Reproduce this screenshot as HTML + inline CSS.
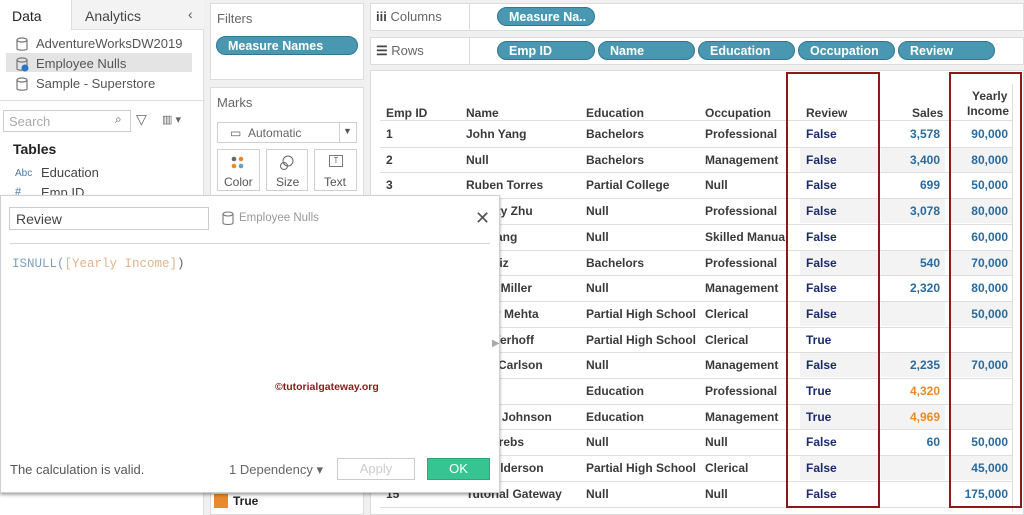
<!DOCTYPE html>
<html><head><meta charset="utf-8"><style>
*{box-sizing:border-box;margin:0;padding:0}
body{width:1024px;height:515px;overflow:hidden;background:#f0f0f0;font-family:"Liberation Sans",sans-serif;position:relative;color:#333}
.a{position:absolute}
.panel{position:absolute;background:#fff;border:1px solid #dcdcdc}
.pill{position:absolute;height:19px;border-radius:10px;background:#4a97b2;border:1px solid #2f7791;color:#fff;font-size:12.5px;font-weight:bold;padding:2px 0 0 11px;white-space:nowrap}
.t{position:absolute;font-size:12px;font-weight:bold;color:#3a3a3a;white-space:nowrap}
.b{color:#1a2a6c}
.n{color:#2a6a9c}
.o{color:#e8892b}
.line{position:absolute;height:1px;background:#dedede}
.sh{position:absolute;background:#f3f3f3}
.r{text-align:right}
</style></head><body>
<div class="panel" style="left:0;top:0;width:204px;height:515px;border:none;border-right:1px solid #dcdcdc"></div>
<div class="a" style="left:0;top:0;width:72px;height:30px;background:#fff;border-right:1px solid #dcdcdc"></div>
<div class="a" style="left:72px;top:0;width:132px;height:30px;background:#f3f3f3;border-bottom:1px solid #dcdcdc"></div>
<div class="a" style="left:12px;top:8px;font-size:14px;color:#222">Data</div>
<div class="a" style="left:85px;top:8px;font-size:14px;color:#444">Analytics</div>
<div class="a" style="left:188px;top:6px;font-size:14px;color:#555">‹</div>
<div class="a" style="left:6px;top:53px;width:186px;height:19px;background:#e4e4e4"></div>
<svg class="a" style="left:15px;top:37px" width="14" height="60"><g fill="none" stroke="#777" stroke-width="1.2"><ellipse cx="7" cy="3" rx="5" ry="2"/><path d="M2 3v9c0 1.5 10 1.5 10 0V3"/><ellipse cx="7" cy="23" rx="5" ry="2"/><path d="M2 23v9c0 1.5 10 1.5 10 0V23"/><ellipse cx="7" cy="43" rx="5" ry="2"/><path d="M2 43v9c0 1.5 10 1.5 10 0V43"/></g><circle cx="10" cy="31" r="3.5" fill="#2a77c9"/></svg>
<div class="a" style="left:36px;top:36px;font-size:13px;color:#555">AdventureWorksDW2019</div>
<div class="a" style="left:36px;top:56px;font-size:13px;color:#555">Employee Nulls</div>
<div class="a" style="left:36px;top:76px;font-size:13px;color:#555">Sample - Superstore</div>
<div class="line" style="left:0;top:100px;width:204px"></div>
<div class="a" style="left:3px;top:110px;width:128px;height:22px;border:1px solid #ccc;background:#fff"></div>
<div class="a" style="left:9px;top:114px;font-size:13px;color:#aaa">Search</div>
<div class="a" style="left:115px;top:112px;font-size:12px;color:#555">⌕</div>
<div class="a" style="left:136px;top:111px;font-size:14px;color:#666">▽</div>
<div class="a" style="left:162px;top:113px;font-size:11px;color:#666">▥ ▾</div>
<div class="a" style="left:13px;top:141px;font-size:14px;font-weight:bold;color:#222">Tables</div>
<div class="a" style="left:15px;top:168px;font-size:10px;color:#4a7aa5">Abc</div>
<div class="a" style="left:41px;top:165px;font-size:13px;color:#444">Education</div>
<div class="a" style="left:15px;top:186px;font-size:11px;color:#4a7aa5">#</div>
<div class="a" style="left:41px;top:185px;font-size:13px;color:#444">Emp ID</div>

<div class="panel" style="left:210px;top:3px;width:154px;height:77px"></div>
<div class="a" style="left:217px;top:11px;font-size:13px;color:#666">Filters</div>
<div class="pill" style="left:216px;top:36px;width:142px;height:19px">Measure Names</div>
<div class="panel" style="left:210px;top:87px;width:154px;height:428px"></div>
<div class="a" style="left:217px;top:95px;font-size:13px;color:#666">Marks</div>
<div class="a" style="left:217px;top:122px;width:140px;height:21px;border:1px solid #d0d0d0;background:#fff"></div>
<div class="a" style="left:339px;top:122px;width:1px;height:21px;background:#d0d0d0"></div>
<div class="a" style="left:230px;top:126px;font-size:12px;color:#666">▭ &nbsp;Automatic</div>
<div class="a" style="left:343px;top:126px;font-size:9px;color:#555">▼</div>
<div class="a" style="left:217px;top:149px;width:43px;height:42px;border:1px solid #d0d0d0"></div>
<div class="a" style="left:266px;top:149px;width:42px;height:42px;border:1px solid #d0d0d0"></div>
<div class="a" style="left:314px;top:149px;width:43px;height:42px;border:1px solid #d0d0d0"></div>
<svg class="a" style="left:231px;top:156px" width="14" height="14"><circle cx="3" cy="3" r="2.3" fill="#666"/><circle cx="10" cy="3" r="2.3" fill="#e8892b"/><circle cx="3" cy="10" r="2.3" fill="#e8892b"/><circle cx="10" cy="10" r="2.3" fill="#6a9bc8"/></svg>
<div class="a" style="left:224px;top:175px;font-size:12px;color:#555">Color</div>
<svg class="a" style="left:279px;top:155px" width="16" height="16"><g fill="none" stroke="#666"><circle cx="9" cy="6" r="5"/><circle cx="5" cy="11" r="3.5"/></g></svg>
<div class="a" style="left:276px;top:175px;font-size:12px;color:#555">Size</div>
<div class="a" style="left:329px;top:155px;width:14px;height:12px;border:1px solid #777;font-size:8px;text-align:center;line-height:10px;color:#666">T</div>
<div class="a" style="left:324px;top:175px;font-size:12px;color:#555">Text</div>
<div class="a" style="left:214px;top:494px;width:14px;height:14px;background:#e8892b"></div>
<div class="a" style="left:233px;top:494px;font-size:12px;font-weight:bold;color:#222">True</div>

<div class="panel" style="left:370px;top:3px;width:654px;height:28px"></div>
<div class="a" style="left:469px;top:3px;width:1px;height:28px;background:#dcdcdc"></div>
<div class="a" style="left:376px;top:9px;font-size:13px;color:#666"><b style="color:#444">iii</b> Columns</div>
<div class="pill" style="left:497px;top:7px;width:98px">Measure Na..</div>
<div class="panel" style="left:370px;top:37px;width:654px;height:28px"></div>
<div class="a" style="left:469px;top:37px;width:1px;height:28px;background:#dcdcdc"></div>
<div class="a" style="left:376px;top:43px;font-size:13px;color:#666"><b style="color:#444">☰</b> Rows</div>
<div class="pill" style="left:497px;top:41px;width:98px">Emp ID</div>
<div class="pill" style="left:598px;top:41px;width:97px">Name</div>
<div class="pill" style="left:698px;top:41px;width:97px">Education</div>
<div class="pill" style="left:798px;top:41px;width:97px">Occupation</div>
<div class="pill" style="left:898px;top:41px;width:97px">Review</div>

<div class="panel" style="left:370px;top:70px;width:654px;height:445px"></div>
<div class="t" style="left:972px;top:89px">Yearly</div>
<div class="t" style="left:386px;top:106px">Emp ID</div>
<div class="t" style="left:466px;top:106px">Name</div>
<div class="t" style="left:586px;top:106px">Education</div>
<div class="t" style="left:705px;top:106px">Occupation</div>
<div class="t" style="left:806px;top:106px">Review</div>
<div class="t" style="left:912px;top:106px">Sales</div>
<div class="t" style="left:967px;top:104px">Income</div>
<div class="line" style="left:380px;top:120px;width:632px"></div>
<div class="a" style="left:1012px;top:84px;width:1px;height:428px;background:#dedede"></div>
<div id="rows"></div>
<script>
var d=[
["1","John Yang","Bachelors","Professional","False","3,578","90,000"],
["2","Null","Bachelors","Management","False","3,400","80,000"],
["3","Ruben Torres","Partial College","Null","False","699","50,000"],
["4","Christy Zhu","Null","Professional","False","3,078","80,000"],
["5","Li Huang","Null","Skilled Manua","False","","60,000"],
["6","Jo Ruiz","Bachelors","Professional","False","540","70,000"],
["7","Janet Miller","Null","Management","False","2,320","80,000"],
["8","Marcy Mehta","Partial High School","Clerical","False","","50,000"],
["9","Rob Verhoff","Partial High School","Clerical","True","",""],
["10","Shay Carlson","Null","Management","False","2,235","70,000"],
["11","","Education","Professional","True","4,320",""],
["12","Wyatt Johnson","Education","Management","True","4,969",""],
["13","Jim Krebs","Null","Null","False","60","50,000"],
["14","Ken Alderson","Partial High School","Clerical","False","","45,000"],
["15","Tutorial Gateway","Null","Null","False","","175,000"]];
var h="";
for(var i=0;i<15;i++){var y=121+i*25.7,r=d[i];
if(i%2==1){h+='<div class="sh" style="left:800px;top:'+(y+1)+'px;width:78px;height:24px"></div><div class="sh" style="left:881px;top:'+(y+1)+'px;width:64px;height:24px"></div><div class="sh" style="left:950px;top:'+(y+1)+'px;width:62px;height:24px"></div>';}
var ty=y+6,oc=(r[4]=="True")?"o":"n";
h+='<div class="t" style="left:386px;top:'+ty+'px">'+r[0]+'</div><div class="t" style="left:466px;top:'+ty+'px">'+r[1]+'</div><div class="t" style="left:586px;top:'+ty+'px">'+r[2]+'</div><div class="t" style="left:705px;top:'+ty+'px">'+r[3]+'</div><div class="t b" style="left:806px;top:'+ty+'px">'+r[4]+'</div><div class="t r '+oc+'" style="left:880px;width:60px;top:'+ty+'px">'+r[5]+'</div><div class="t r n" style="left:940px;width:68px;top:'+ty+'px">'+r[6]+'</div><div class="line" style="left:380px;top:'+(y+25.7)+'px;width:632px"></div>';}
document.getElementById("rows").innerHTML=h;
</script>
<div class="a" style="left:786px;top:72px;width:94px;height:436px;border:2px solid #8b1a1a"></div>
<div class="a" style="left:949px;top:72px;width:73px;height:436px;border:2px solid #8b1a1a"></div>

<div class="a" style="left:0;top:195px;width:500px;height:298px;background:#fff;border:1px solid #cfcfcf;box-shadow:0 2px 3px rgba(0,0,0,.35)"></div>
<div class="a" style="left:9px;top:207px;width:200px;height:23px;border:1px solid #ccc"></div>
<div class="a" style="left:16px;top:211px;font-size:14px;color:#444">Review</div>
<svg class="a" style="left:222px;top:211px" width="12" height="16"><g fill="none" stroke="#777" stroke-width="1.1"><ellipse cx="6" cy="3" rx="5" ry="2"/><path d="M1 3v9c0 2 10 2 10 0V3"/></g></svg>
<div class="a" style="left:239px;top:212px;font-size:11.5px;color:#999">Employee Nulls</div>
<div class="a" style="left:475px;top:208px;font-size:18px;color:#555">✕</div>
<div class="line" style="left:10px;top:243px;width:480px;background:#d5d5d5"></div>
<div class="a" style="left:12px;top:257px;font-family:'Liberation Mono',monospace;font-size:12.5px;color:#7ea0be">ISNULL(<span style="color:#e0b48c">[Yearly Income]</span><span style="color:#666">)</span></div>
<div class="a" style="left:492px;top:338px;font-size:10px;color:#aaa">▶</div>
<div class="a" style="left:275px;top:381px;font-size:10.5px;font-weight:bold;color:#8b1a1a">©tutorialgateway.org</div>
<div class="a" style="left:10px;top:462px;font-size:13px;color:#555">The calculation is valid.</div>
<div class="a" style="left:229px;top:462px;font-size:13px;color:#666">1 Dependency ▾</div>
<div class="a" style="left:337px;top:458px;width:78px;height:22px;border:1px solid #ccc;font-size:13px;color:#ccc;text-align:center;line-height:20px">Apply</div>
<div class="a" style="left:427px;top:458px;width:63px;height:22px;background:#35c492;border:1px solid #2aa87c;font-size:13px;color:#fff;text-align:center;line-height:20px">OK</div>
</body></html>
